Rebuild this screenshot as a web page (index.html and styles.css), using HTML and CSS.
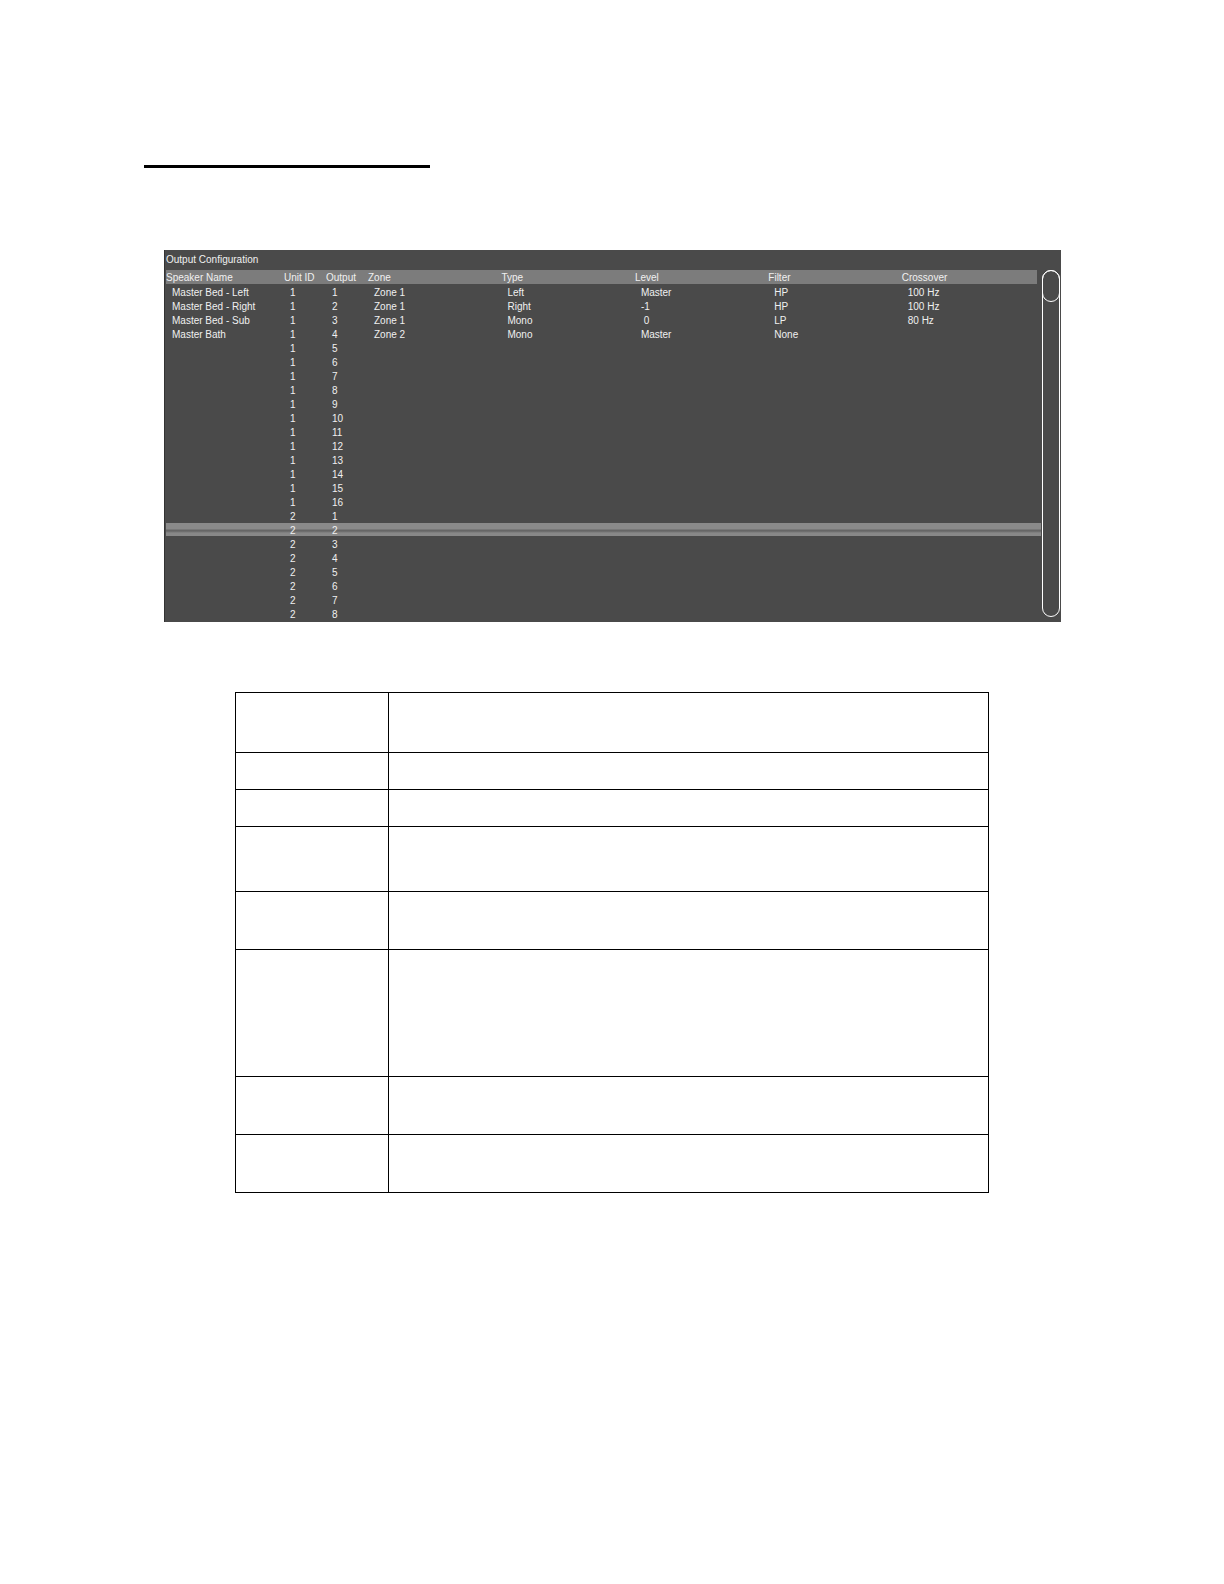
FILE: index.html
```html
<!DOCTYPE html>
<html lang="en">
<head>
  <meta charset="UTF-8" />
  <meta name="viewport" content="width=device-width, initial-scale=1.0"/>
  <title>Output Configuration</title>
  <link rel="stylesheet" href="styles.css">
</head>
<body>

  <main class="page">
    <hr class="heading-rule">

    <!-- Output configuration panel -->
    <section class="panel">
      <h2 class="panel-title">Output Configuration</h2>
      <div class="panel-body">
        <table class="outputs">
          <colgroup>
            <col class="col-name">
            <col class="col-id">
            <col class="col-id">
            <col class="col-wide">
            <col class="col-wide">
            <col class="col-wide">
            <col class="col-wide">
            <col>
          </colgroup>
          <thead>
            <tr>
              <th>Speaker Name</th>
              <th>Unit ID</th>
              <th>Output</th>
              <th>Zone</th>
              <th>Type</th>
              <th>Level</th>
              <th>Filter</th>
              <th>Crossover</th>
            </tr>
          </thead>
          <tbody>
            <tr><td>Master Bed - Left</td><td>1</td><td>1</td><td>Zone 1</td><td>Left</td><td>Master</td><td>HP</td><td>100 Hz</td></tr>
            <tr><td>Master Bed - Right</td><td>1</td><td>2</td><td>Zone 1</td><td>Right</td><td>-1</td><td>HP</td><td>100 Hz</td></tr>
            <tr><td>Master Bed - Sub</td><td>1</td><td>3</td><td>Zone 1</td><td>Mono</td><td>&nbsp;0</td><td>LP</td><td>80 Hz</td></tr>
            <tr><td>Master Bath</td><td>1</td><td>4</td><td>Zone 2</td><td>Mono</td><td>Master</td><td>None</td><td></td></tr>
            <tr><td></td><td>1</td><td>5</td><td colspan="5"></td></tr>
            <tr><td></td><td>1</td><td>6</td><td colspan="5"></td></tr>
            <tr><td></td><td>1</td><td>7</td><td colspan="5"></td></tr>
            <tr><td></td><td>1</td><td>8</td><td colspan="5"></td></tr>
            <tr><td></td><td>1</td><td>9</td><td colspan="5"></td></tr>
            <tr><td></td><td>1</td><td>10</td><td colspan="5"></td></tr>
            <tr><td></td><td>1</td><td>11</td><td colspan="5"></td></tr>
            <tr><td></td><td>1</td><td>12</td><td colspan="5"></td></tr>
            <tr><td></td><td>1</td><td>13</td><td colspan="5"></td></tr>
            <tr><td></td><td>1</td><td>14</td><td colspan="5"></td></tr>
            <tr><td></td><td>1</td><td>15</td><td colspan="5"></td></tr>
            <tr><td></td><td>1</td><td>16</td><td colspan="5"></td></tr>
            <tr><td></td><td>2</td><td>1</td><td colspan="5"></td></tr>
            <tr class="selected"><td></td><td>2</td><td>2</td><td colspan="5"></td></tr>
            <tr><td></td><td>2</td><td>3</td><td colspan="5"></td></tr>
            <tr><td></td><td>2</td><td>4</td><td colspan="5"></td></tr>
            <tr><td></td><td>2</td><td>5</td><td colspan="5"></td></tr>
            <tr><td></td><td>2</td><td>6</td><td colspan="5"></td></tr>
            <tr><td></td><td>2</td><td>7</td><td colspan="5"></td></tr>
            <tr><td></td><td>2</td><td>8</td><td colspan="5"></td></tr>
          </tbody>
        </table>
        <div class="scrollbar"><div class="thumb"></div></div>
      </div>
    </section>

    <!-- Field descriptions -->
    <table class="fields">
      <tbody>
        <tr class="row-medium"><td></td><td></td></tr>
        <tr class="row-short"><td></td><td></td></tr>
        <tr class="row-short"><td></td><td></td></tr>
        <tr class="row-large"><td></td><td></td></tr>
        <tr class="row-normal"><td></td><td></td></tr>
        <tr class="row-tall"><td></td><td></td></tr>
        <tr class="row-normal"><td></td><td></td></tr>
        <tr class="row-normal"><td></td><td></td></tr>
      </tbody>
    </table>
  </main>

</body>
</html>
```
FILE: styles.css
```css
* {
  box-sizing: border-box;
}

body {
  margin: 0;
  background: #fff;
  font-family: "Liberation Sans", Arial, sans-serif;
  font-size: 10px;
}

.page {
  padding: 165px 144px;
}

.heading-rule {
  width: 286px;
  height: 3px;
  margin: 0;
  border: none;
  background: #000;
}

/* Dark panel */
.panel {
  margin: 82px 19px 0 20px;
  padding: 0 1px 1px;
  border-left: 1px solid #333;
  background: #4a4a4a;
  color: #f0f0f0;
}

.panel-title {
  margin: 0;
  font-size: 10px;
  font-weight: normal;
  line-height: 20px;
}

.panel-body {
  display: flex;
  gap: 1px;
}

.outputs {
  flex: 1;
  table-layout: fixed;
  border-collapse: separate;
  border-spacing: 0;
}

.col-name {
  width: 118px;
}

.col-id {
  width: 42px;
}

.col-wide {
  width: 15.25%;
}

.outputs th,
.outputs td {
  height: 14px;
  padding: 2px 0 0;
  line-height: 12px;
  text-align: left;
  font-weight: normal;
  white-space: nowrap;
}

.outputs th {
  height: 15px;
  border-bottom: 1px solid #4a4a4a;
  background: #7c7c7c;
}

.outputs th:last-child {
  border-right: 4px solid #4a4a4a;
}

.outputs td {
  padding-left: 6px;
}

.outputs .selected {
  background: linear-gradient(#8a8a8a 6px, #666 7px, #666 8px, #888 10px, #888 13px, #4a4a4a 13px);
}

.scrollbar {
  width: 18px;
  margin-bottom: 4px;
  border: 1px solid #fff;
  border-radius: 9px;
}

.thumb {
  height: 32px;
  margin: -1px;
  border: 1px solid #fff;
  border-radius: 9px;
}

/* Description table */
.fields {
  width: calc(100% - 182px);
  margin: 70px auto 0;
  table-layout: fixed;
  border-collapse: collapse;
}

.fields td {
  padding: 0;
  border: 1px solid #000;
}

.fields td:first-child {
  width: 153px;
}

.row-short {
  height: 37px;
}

.row-normal {
  height: 58px;
}

.row-medium {
  height: 60px;
}

.row-large {
  height: 65px;
}

.row-tall {
  height: 127px;
}
```
